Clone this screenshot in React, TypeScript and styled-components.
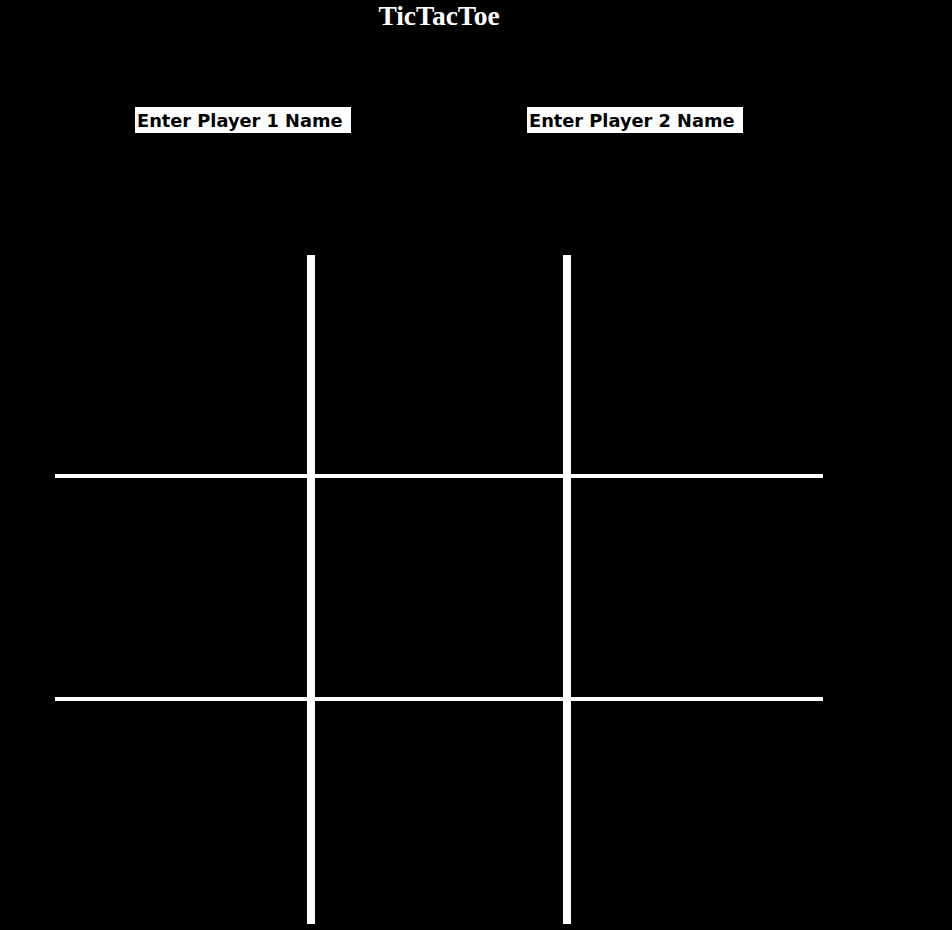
import React from "react";
import styled, { createGlobalStyle } from "styled-components";

const Global = createGlobalStyle`
  html, body { margin: 0; padding: 0; background: #000; }
  body { width: 952px; height: 930px; overflow: hidden; }
`;

const Page = styled.div`
  width: 768px;
  margin-left: 55px;
  display: flex;
  flex-direction: column;
`;

const Title = styled.h1`
  margin: 0;
  padding-top: 1px;
  height: 41px;
  text-align: center;
  font-family: "Liberation Serif", "Times New Roman", serif;
  font-weight: bold;
  font-size: 27.5px;
  line-height: 30px;
  color: #fff;
`;

const Players = styled.div`
  display: flex;
  margin-top: 65px;
  height: 26px;
`;

const Slot = styled.div<{ $pad: number }>`
  width: 384px;
  padding-left: ${(p) => p.$pad}px;
  box-sizing: border-box;
`;

const Label = styled.span`
  display: inline-block;
  background: #fff;
  color: #000;
  font-family: "DejaVu Sans", Verdana, sans-serif;
  font-weight: bold;
  font-size: 17.8px;
  line-height: 28px;
  height: 26px;
  overflow: hidden;
  padding: 0 8px 0 2px;
  white-space: nowrap;
`;

const Board = styled.div`
  margin-top: 122px;
  display: grid;
  grid-template-columns: repeat(3, 256px);
  grid-template-rows: repeat(3, 223px);
`;

const Cell = styled.div<{ $col: number; $row: number }>`
  box-sizing: border-box;
  border-left: ${(p) => (p.$col > 0 ? "4px solid #fff" : "none")};
  border-right: ${(p) => (p.$col < 2 ? "4px solid #fff" : "none")};
  border-bottom: ${(p) => (p.$row < 2 ? "4px solid #fff" : "none")};
`;

export default function App() {
  const cells = Array.from({ length: 9 }, (_, i) => i);
  return (
    <>
      <Global />
      <Page>
        <Title>TicTacToe</Title>
        <Players>
          <Slot $pad={80}>
            <Label>Enter Player 1 Name</Label>
          </Slot>
          <Slot $pad={88}>
            <Label>Enter Player 2 Name</Label>
          </Slot>
        </Players>
        <Board>
          {cells.map((i) => (
            <Cell key={i} $col={i % 3} $row={Math.floor(i / 3)} />
          ))}
        </Board>
      </Page>
    </>
  );
}
